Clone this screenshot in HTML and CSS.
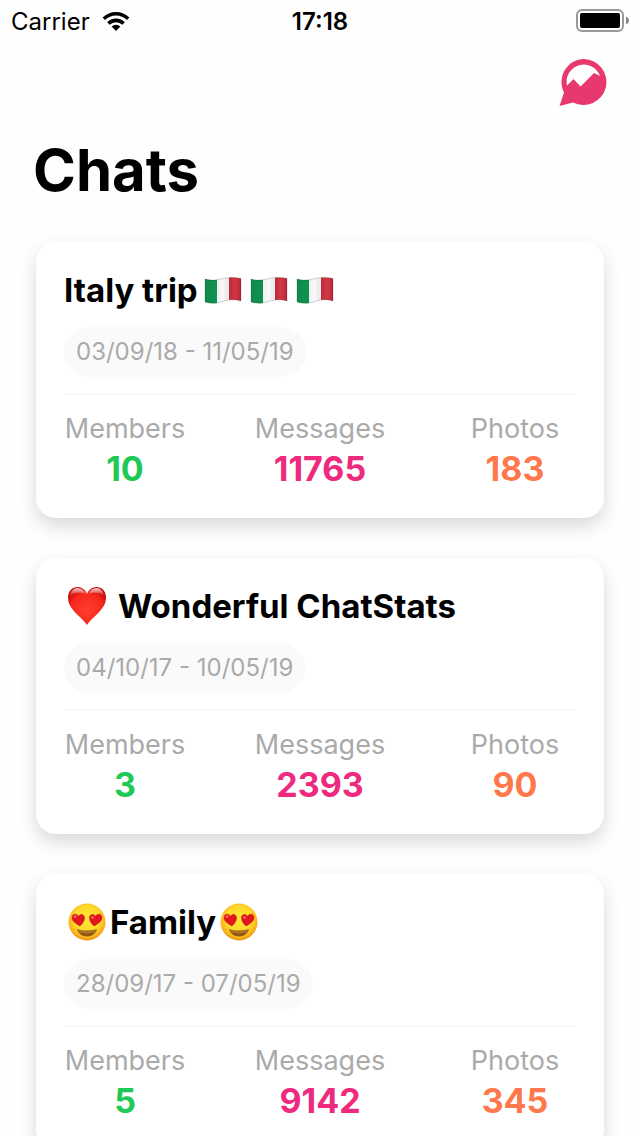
FILE: index.html
```html
<!DOCTYPE html>
<html lang="en">
<head>
  <meta charset="UTF-8" />
  <meta name="viewport" content="width=device-width, initial-scale=1.0" />
  <title>Chats</title>
  <link rel="stylesheet" href="styles.css">
</head>
<body>
  <!-- Shared icons -->
  <svg class="sprite" aria-hidden="true">
    <defs>
      <linearGradient id="flag-shade" x1="0" y1="0" x2="1" y2="0">
        <stop offset="0" stop-color="#000" stop-opacity="0.06" />
        <stop offset="0.25" stop-color="#000" stop-opacity="0" />
        <stop offset="0.5" stop-color="#fff" stop-opacity="0.1" />
        <stop offset="0.62" stop-color="#000" stop-opacity="0.05" />
        <stop offset="0.8" stop-color="#fff" stop-opacity="0.08" />
        <stop offset="1" stop-color="#000" stop-opacity="0.12" />
      </linearGradient>
      <clipPath id="flag-shape">
        <path d="M1 3C7 5 13 4 19 2.500C25 1 31 1 37 2.500V25C31 23 25 23.500 19 25.500C13 27.500 7 28 1 26Z" />
      </clipPath>
      <radialGradient id="heart-fill" cx="0.5" cy="0.6" r="0.6">
        <stop offset="0" stop-color="#ff3f30" />
        <stop offset="0.7" stop-color="#f7281f" />
        <stop offset="1" stop-color="#c90d0b" />
      </radialGradient>
      <linearGradient id="heart-shine" x1="0" y1="0" x2="0" y2="1">
        <stop offset="0" stop-color="#fff" stop-opacity="0.8" />
        <stop offset="1" stop-color="#fff" stop-opacity="0" />
      </linearGradient>
      <radialGradient id="face-fill" cx="0.5" cy="0.42" r="0.58">
        <stop offset="0" stop-color="#ffe635" />
        <stop offset="0.6" stop-color="#ffd92b" />
        <stop offset="0.84" stop-color="#fcb51c" />
        <stop offset="1" stop-color="#e8920f" />
      </radialGradient>
    </defs>
    <symbol id="flag" viewBox="0 0 38 28">
      <g clip-path="url(#flag-shape)">
        <rect width="38" height="28" fill="#f8f8f8" />
        <rect width="13" height="28" fill="#109150" />
        <rect x="25" width="13" height="28" fill="#cc2637" />
        <rect width="38" height="28" fill="url(#flag-shade)" />
      </g>
      <path d="M1 3C7 5 13 4 19 2.500C25 1 31 1 37 2.500V25C31 23 25 23.500 19 25.500C13 27.500 7 28 1 26Z" fill="none" stroke="#000" stroke-opacity="0.25" stroke-width="0.7" />
    </symbol>
    <symbol id="heart" viewBox="0 0 40 40">
      <path d="M20 39C15 31 1 24 1 11.500C1 5 5.500 1 10.500 1C15 1 18.500 4 20 8C21.500 4 25 1 29.500 1C34.500 1 39 5 39 11.500C39 24 25 31 20 39Z" fill="url(#heart-fill)" />
      <path d="M3 10C3.500 5 7 2 10.500 2C14 2 17 4 18.500 8C14 6 7 6 3 10Z" fill="url(#heart-shine)" />
      <path d="M37 10C36.500 5 33 2 29.500 2C26 2 23 4 21.500 8C26 6 33 6 37 10Z" fill="url(#heart-shine)" />
    </symbol>
    <symbol id="heart-eyes" viewBox="0 0 40 40">
      <circle cx="20" cy="20" r="18.500" fill="url(#face-fill)" />
      <path d="M10 27C16 29 24 29 30 27C29 31.500 25 34.500 20 34.500C15 34.500 11 31.500 10 27Z" fill="#8f5a14" />
      <path d="M11 28C17 30 23 30 29 28L28 30C23 31.500 17 31.500 12 30Z" fill="#b87a24" />
      <g fill="#e3151d" stroke="#b50c14" stroke-width="0.5">
        <path d="M13 24C9 22 5 19 5 15.500C5 11.500 10 11 11.500 14.500C13.500 11 18 12.500 17.500 16.500C17 20 15 22 13 24Z" />
        <path d="M27 24C31 22 35 19 35 15.500C35 11.500 30 11 28.500 14.500C26.500 11 22 12.500 22.500 16.500C23 20 25 22 27 24Z" />
      </g>
      <g fill="#ff7a76" opacity="0.8">
        <ellipse cx="8" cy="14.500" rx="1.600" ry="1.200" />
        <ellipse cx="25.500" cy="15.500" rx="1.600" ry="1.200" />
      </g>
    </symbol>
  </svg>

  <header class="status-bar">
    <div class="carrier">
      <span>Carrier</span>
      <svg class="wifi" viewBox="0 0 28 20" aria-hidden="true">
        <path d="M0.600 6.600A19 19 0 0 1 27.400 6.600L25 9A15.600 15.600 0 0 0 3 9Z" />
        <path d="M5.200 11.200A12.500 12.500 0 0 1 22.800 11.200L20.300 13.700A9 9 0 0 0 7.700 13.700Z" />
        <path d="M9.600 15.600A6.400 6.400 0 0 1 18.400 15.600L14 20Z" />
      </svg>
    </div>
    <time class="clock">17:18</time>
    <svg class="battery" viewBox="0 0 53 24" aria-hidden="true">
      <rect x="1" y="1" width="46" height="21" rx="5" fill="none" stroke="#999" stroke-width="2" />
      <rect x="4" y="4" width="40" height="15" rx="2" />
      <path d="M50 7.500C54 9 54 14 50 15.500Z" fill="#888" />
    </svg>
  </header>

  <main class="screen">
    <div class="toolbar">
      <button class="stats-button" type="button" aria-label="Chat stats">
        <svg viewBox="0 0 48 48" aria-hidden="true">
          <path d="M25 1A23 23 0 1 1 14 44.500L0.500 48L5 34.500A23 23 0 0 1 25 1Z" fill="#e8396f" />
          <path d="M8 27.500A17.200 17.200 0 0 1 41 18L35 15L21.500 28.500L14.500 21Z" fill="#fff" />
        </svg>
      </button>
    </div>
    <h1>Chats</h1>

    <section class="chat-list">
      <article class="card">
        <h2>Italy trip<span class="flags"><svg class="flag" role="img" aria-label="Italy"><use href="#flag" /></svg><svg class="flag" role="img" aria-label="Italy"><use href="#flag" /></svg><svg class="flag" role="img" aria-label="Italy"><use href="#flag" /></svg></span></h2>
        <p class="dates">03/09/18 - 11/05/19</p>
        <dl class="stats">
          <div class="stat members"><dt>Members</dt><dd>10</dd></div>
          <div class="stat messages"><dt>Messages</dt><dd>11765</dd></div>
          <div class="stat photos"><dt>Photos</dt><dd>183</dd></div>
        </dl>
      </article>

      <article class="card">
        <h2><svg class="emoji spaced" role="img" aria-label="Heart"><use href="#heart" /></svg>Wonderful ChatStats</h2>
        <p class="dates">04/10/17 - 10/05/19</p>
        <dl class="stats">
          <div class="stat members"><dt>Members</dt><dd>3</dd></div>
          <div class="stat messages"><dt>Messages</dt><dd>2393</dd></div>
          <div class="stat photos"><dt>Photos</dt><dd>90</dd></div>
        </dl>
      </article>

      <article class="card">
        <h2><svg class="emoji" role="img" aria-label="Heart eyes"><use href="#heart-eyes" /></svg>Family<svg class="emoji" role="img" aria-label="Heart eyes"><use href="#heart-eyes" /></svg></h2>
        <p class="dates">28/09/17 - 07/05/19</p>
        <dl class="stats">
          <div class="stat members"><dt>Members</dt><dd>5</dd></div>
          <div class="stat messages"><dt>Messages</dt><dd>9142</dd></div>
          <div class="stat photos"><dt>Photos</dt><dd>345</dd></div>
        </dl>
      </article>
    </section>
  </main>
</body>
</html>
```
FILE: styles.css
```css
* {
  box-sizing: border-box;
}
body {
  display: flex;
  flex-direction: column;
  height: 100vh;
  margin: 0;
  background: #fefefe;
  color: #000;
  font-family: Inter, "Liberation Sans", sans-serif;
}
h1, h2, p, dl, dd {
  margin: 0;
}
.sprite {
  position: absolute;
  width: 0;
  height: 0;
}

/* Status bar */
.status-bar {
  display: grid;
  grid-template-columns: 1fr auto 1fr;
  align-items: center;
  flex: none;
  height: 42px;
  padding: 0 11px;
  font-size: 24px;
}
.carrier {
  display: flex;
  align-items: center;
  gap: 12px;
}
.wifi {
  width: 28px;
  height: 20px;
}
.clock {
  font-weight: 600;
}
.battery {
  justify-self: end;
  width: 53px;
  height: 24px;
}

/* Scrolling content */
.screen {
  flex: 1;
  min-height: 0;
  overflow-y: auto;
  scrollbar-width: none;
}
.toolbar {
  display: flex;
  justify-content: flex-end;
  padding: 16px 33px 0;
}
.stats-button {
  width: 48px;
  height: 48px;
  padding: 0;
  border: none;
  background: none;
  cursor: pointer;
}
.stats-button svg {
  display: block;
}
h1 {
  padding: 28px 33px 0;
  font-size: 58px;
  line-height: 72px;
}

/* Cards */
.chat-list {
  display: flex;
  flex-direction: column;
  gap: 40px;
  padding: 36px;
}
.card {
  padding: 28px;
  border-radius: 20px;
  background: #fff;
  box-shadow: 0 8px 18px rgba(0,0,0,0.15);
}
h2 {
  display: flex;
  align-items: center;
  font-size: 33px;
  line-height: 40px;
}
.flags {
  display: flex;
  gap: 8px;
  padding-left: 6px;
}
.flag {
  width: 38px;
  height: 28px;
}
.emoji {
  width: 40px;
  height: 40px;
  margin: 0 3px;
}
.spaced {
  margin-right: 11px;
}
.dates {
  width: fit-content;
  margin-top: 17px;
  padding: 0 12px;
  border-radius: 25px;
  background: #fafafa;
  color: #aaa;
  font-size: 24px;
  line-height: 50px;
}
.stats {
  display: flex;
  justify-content: space-between;
  margin-top: 16px;
  padding-top: 16px;
  border-top: 2px solid #f9f9f9;
}
.stat {
  min-width: 122px;
  text-align: center;
}
dt {
  color: #aaa;
  font-size: 27px;
  line-height: 36px;
}
dd {
  font-size: 34px;
  font-weight: 700;
  line-height: 43px;
}
.members dd {
  color: #20c956;
}
.messages dd {
  color: #ee2a7f;
}
.photos dd {
  color: #ff784b;
}
```
